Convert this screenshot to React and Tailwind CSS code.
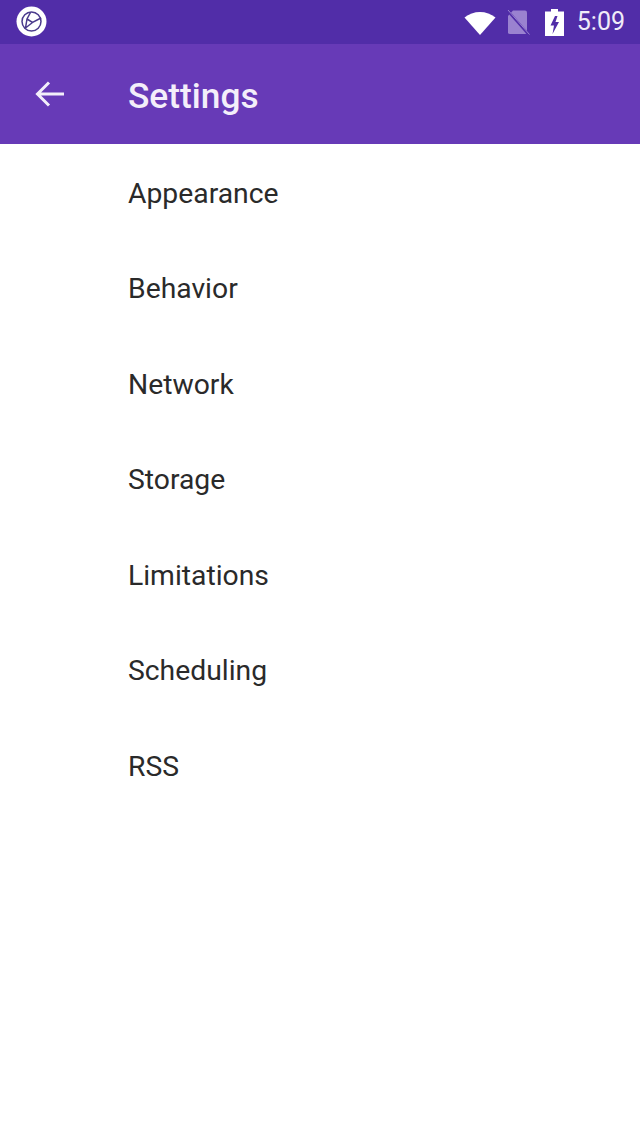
export default function App() {
  const items = ["Appearance", "Behavior", "Network", "Storage", "Limitations", "Scheduling", "RSS"];
  return (
    <div className="w-[640px] h-[1139px] bg-white flex flex-col overflow-hidden" style={{ fontFamily: "Roboto, sans-serif" }}>
      <div className="h-[44px] bg-[#512da8] flex items-center pl-[16px] pr-[15px] shrink-0">
        <svg width="31" height="31" viewBox="0 0 31 31" className="mb-[1px]">
          <circle cx="15.5" cy="15.5" r="15" fill="#fff" />
          <circle cx="15.5" cy="15.5" r="9.5" fill="none" stroke="#4a3a8c" strokeWidth="1.5" />
          <path d="M14.5 6.5 L11 13 L9.5 22 M11 13 L16.5 16.5 L25 12 M16.5 16.5 L9.5 22" fill="none" stroke="#4a3a8c" strokeWidth="1.5" />
        </svg>
        <div className="ml-auto flex items-center">
          <svg width="32" height="24" viewBox="0 0 32 24" className="mt-[1px]">
            <path d="M0.5 6.5 C9 -1 23 -1 31.5 6.5 L16 24 Z" fill="#fff" />
          </svg>
          <svg width="23" height="25" viewBox="0 0 23 25" className="ml-[11px]">
            <path d="M6 0.5 H18 Q20 0.5 20 2.5 V22.5 Q20 24 18 24 H3 Q1 24 1 22.5 V6 Z" fill="#9a82d0" />
            <path d="M0.5 0.5 L22 25" stroke="#512da8" strokeWidth="2.5" />
            <path d="M1 0 L22.5 24.5" stroke="#9a82d0" strokeWidth="1" />
          </svg>
          <svg width="19" height="27" viewBox="0 0 19 27" className="ml-[15px]">
            <path d="M6 0 H13 V2.5 H19 V27 H0 V2.5 H6 Z M10 7 L5.5 16.5 H9 L7.5 25 L14 13 H10.5 L12.5 7 Z" fill="#fff" fillRule="evenodd" />
          </svg>
          <span className="ml-[13px] text-[25px] leading-[28px] text-[#f0ebf8]">5:09</span>
        </div>
      </div>
      <div className="h-[100px] bg-[#673ab7] flex items-center shrink-0">
        <svg width="30" height="28" viewBox="0 0 30 28" className="ml-[35px] shrink-0" fill="none" stroke="#f3eefa" strokeWidth="3">
          <path d="M29 14 H3 M14 2.5 L2.5 14 L14 25.5" />
        </svg>
        <span className="ml-[63px] mt-[3px] text-[35.3px] leading-[40px] font-medium text-[#f3eefa]">Settings</span>
      </div>
      <ul className="flex flex-col pl-[128px]">
        {items.map((t) => (
          <li key={t} className="h-[95.5px] pt-[4px] flex items-center text-[28.3px] leading-[32px] text-[#2a2a2a]">{t}</li>
        ))}
      </ul>
    </div>
  );
}
